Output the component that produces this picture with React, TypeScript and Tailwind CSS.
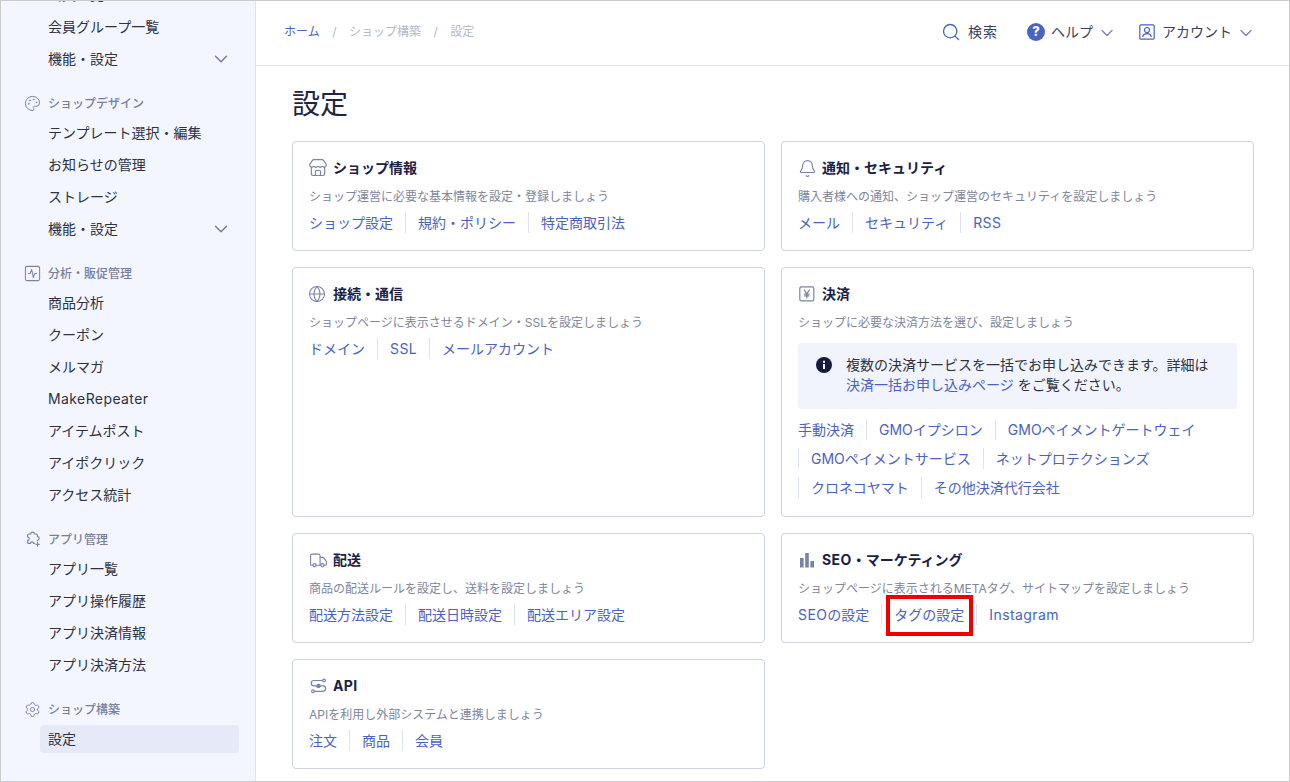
import React from "react";
import { Search, Store, Bell, Globe, Truck, Palette, SquareActivity, Settings, ChevronDown } from "lucide-react";

const FONT = "font-['Inter','Noto_Sans_CJK_JP','Noto_Sans',sans-serif]";

// Latin runs in the reference are set slightly wider than the CJK around them
function Txt({ t }: { t: string }) {
  const parts = t.split(/(MakeRepeater|Instagram|RSS|SSL|SEO|API)/);
  return (
    <>
      {parts.map((p, i) =>
        i % 2 === 1 ? (
          <span key={i} className="tracking-[0.4px]">{p}</span>
        ) : (
          <React.Fragment key={i}>{p}</React.Fragment>
        )
      )}
    </>
  );
}

function Item({ label, chevron, active }: { label: string; chevron?: boolean; active?: boolean }) {
  return (
    <div className={`mt-1 ml-[39px] w-[199px] h-7 pl-2 pr-[7px] flex items-center justify-between rounded text-sm text-[#2d3142] ${active ? "bg-[#e6e9f7]" : ""}`}>
      <span><Txt t={label} /></span>
      {chevron && <ChevronDown size={22} strokeWidth={1.5} className="text-[#6f78a8] -mt-px" />}
    </div>
  );
}

function PuzzlePlus() {
  return (
    <svg width="16" height="16" viewBox="0 0 16 16" fill="none" stroke="#7a82ac" strokeWidth="1.15" strokeLinejoin="round" strokeLinecap="round">
      <path d="M5.6 3 H3.6 a1 1 0 0 0 -1 1 V6 a1.6 1.6 0 0 1 0 3.4 V11.4 a1 1 0 0 0 1 1 H5.4 a1.6 1.6 0 0 1 3.2 0 H9.6" />
      <path d="M5.6 3 a1.9 1.9 0 0 1 3.8 0 H11.4 a1 1 0 0 1 1 1 V5.6 a1.8 1.8 0 0 1 0 3.6 V10" />
      <path d="M12.6 11.6 V15 M10.9 13.3 H14.3" />
    </svg>
  );
}

function Section({ icon, title, children }: { icon: React.ReactNode; title: string; children: React.ReactNode }) {
  return (
    <div className="mt-[18px]">
      <div className="h-6 flex items-center pl-6 text-xs font-medium text-[#787e9e]">
        <span className="w-[23px] flex items-center">{icon}</span>
        <span className="pt-[2px]">{title}</span>
      </div>
      {children}
    </div>
  );
}

function Sidebar() {
  const ic = "text-[#7a82ac] -ml-px";
  return (
    <aside className="w-[255px] shrink-0 h-full overflow-hidden bg-[#f3f6fe] border-r border-[#dfe3f0]">
      <div className="-mt-6">
        <Item label="会員一覧" />
        <Item label="会員グループ一覧" />
        <Item label="機能・設定" chevron />
        <Section icon={<Palette size={17} strokeWidth={1.4} className={ic} />} title="ショップデザイン">
          <Item label="テンプレート選択・編集" />
          <Item label="お知らせの管理" />
          <Item label="ストレージ" />
          <Item label="機能・設定" chevron />
        </Section>
        <Section icon={<SquareActivity size={19} strokeWidth={1.3} className="text-[#7a82ac] -ml-[2px]" />} title="分析・販促管理">
          <Item label="商品分析" />
          <Item label="クーポン" />
          <Item label="メルマガ" />
          <Item label="MakeRepeater" />
          <Item label="アイテムポスト" />
          <Item label="アイポクリック" />
          <Item label="アクセス統計" />
        </Section>
        <Section icon={<PuzzlePlus />} title="アプリ管理">
          <Item label="アプリ一覧" />
          <Item label="アプリ操作履歴" />
          <Item label="アプリ決済情報" />
          <Item label="アプリ決済方法" />
        </Section>
        <Section icon={<Settings size={17} strokeWidth={1.4} className={ic} />} title="ショップ構築">
          <Item label="設定" active />
        </Section>
      </div>
    </aside>
  );
}

function Links({ items, wrap }: { items: string[]; wrap?: boolean }) {
  return (
    <div className={`flex ${wrap ? "flex-wrap gap-y-2" : ""}`}>
      {items.map((t, i) => (
        <a key={t} className={`h-[21px] flex items-center text-sm text-[#4a62c4] ${i === 0 ? "pr-3" : "px-3 border-l border-[#dfe3ee]"}`}>
          <span><Txt t={t} /></span>
        </a>
      ))}
    </div>
  );
}

function Card({ icon, title, desc, children }: { icon: React.ReactNode; title: string; desc: string; children: React.ReactNode }) {
  return (
    <section className="border border-[#cdd2e4] rounded bg-white p-4">
      <h2 className="h-5 flex items-center text-sm font-bold text-[#1b2146]">
        <span className="w-6 shrink-0 flex items-center">{icon}</span>
        <span><Txt t={title} /></span>
      </h2>
      <p className="mt-[9px] h-5 leading-5 text-xs text-[#80859a]">{desc}</p>
      {children}
    </section>
  );
}

const I = "text-[#7a82ac]";

function YenBox() {
  return (
    <svg className="ml-px" width="16" height="16" viewBox="0 0 16 16" fill="none" stroke="#7a82ac" strokeWidth="1.2" strokeLinecap="round" strokeLinejoin="round">
      <rect x="0.8" y="0.8" width="14" height="14" rx="1.6" />
      <path d="M5.3 4 7.8 7.8 10.3 4 M7.8 7.8 V11.8 M5.6 8.2 H10 M5.6 9.8 H10" />
    </svg>
  );
}
function Bars() {
  return (
    <svg className="ml-px" width="16" height="16" viewBox="0 0 16 16" fill="#7a82ac">
      <rect x="1" y="6" width="3.6" height="9.5" />
      <rect x="6.2" y="1" width="3.6" height="14.5" />
      <rect x="11.4" y="9" width="3.6" height="6.5" />
    </svg>
  );
}
function Api() {
  return (
    <svg className="ml-px" width="17" height="16" viewBox="0 0 17 16" fill="none" stroke="#7a82ac" strokeWidth="1.2" strokeLinecap="round">
      <path d="M12.5 2.5 H4 a2.7 2.7 0 0 0 0 5.4 H13 a2.7 2.7 0 0 1 0 5.4 H4.5" />
      <circle cx="14" cy="2.5" r="1.4" />
      <circle cx="8.5" cy="7.9" r="1.6" fill="#7a82ac" />
      <circle cx="3" cy="13.3" r="1.4" />
    </svg>
  );
}
function Help() {
  return (
    <svg width="18" height="18" viewBox="0 0 18 18">
      <circle cx="9" cy="9" r="9" fill="#4a62c4" />
      <text x="9" y="13.4" textAnchor="middle" fontSize="13" fontWeight="800" fill="#fff" fontFamily="Inter, sans-serif">?</text>
    </svg>
  );
}
function Account() {
  return (
    <svg width="16" height="16" viewBox="0 0 16 16" fill="none" stroke="#4a62c4" strokeWidth="1.2" strokeLinejoin="round">
      <rect x="0.8" y="0.8" width="14.4" height="14.4" rx="1.2" />
      <circle cx="8" cy="6" r="2.5" />
      <path d="M3.6 13 C4 10.4 5.6 9.6 8 9.6 S12 10.4 12.4 13" />
    </svg>
  );
}
function Info() {
  return (
    <svg width="16" height="16" viewBox="0 0 16 16">
      <circle cx="8" cy="8" r="8" fill="#161c3d" />
      <rect x="7" y="7" width="2" height="5" fill="#fff" />
      <rect x="7" y="3.8" width="2" height="2" fill="#fff" />
    </svg>
  );
}

function Header() {
  return (
    <header className="h-[65px] shrink-0 border-b border-[#e3e6f0] flex items-center justify-between pl-7 pr-[33px] pb-[3px]">
      <nav className="flex items-center text-xs text-[#b4b9c9]">
        <a className="text-[#4a62c4]">ホーム</a>
        <span className="mx-[12.5px]">/</span>
        <span>ショップ構築</span>
        <span className="mx-[12.5px]">/</span>
        <span>設定</span>
      </nav>
      <div className="flex items-center text-sm text-[#3a4060]">
        <Search size={20} strokeWidth={1.6} className="text-[#4a62c4] mr-[7px]" />
        <span className="tracking-[1px]">検索</span>
        <span className="ml-[29px] mr-[6px] flex"><Help /></span>
        <span>ヘルプ</span>
        <ChevronDown size={20} strokeWidth={1.5} className="text-[#7a82ac] ml-1 mt-[2px]" />
        <span className="ml-[22px] mr-[7px] flex"><Account /></span>
        <span>アカウント</span>
        <ChevronDown size={20} strokeWidth={1.5} className="text-[#7a82ac] ml-1 mt-[2px]" />
      </div>
    </header>
  );
}

const row = "mt-[5px] pb-px";

export default function App() {
  return (
    <div className={`${FONT} w-[1290px] h-[782px] overflow-hidden border border-[#cccccc] flex bg-white`}>
      <Sidebar />
      <div className="flex-1 min-w-0 flex flex-col">
        <Header />
        <main className="pl-9 pr-[35px]">
          <h1 className="mt-[18px] h-10 leading-10 text-[28px] font-normal text-[#1f2540]">設定</h1>
          <div className="mt-[17px] grid grid-cols-2 gap-4">
            <Card icon={<Store size={20} strokeWidth={1.4} className={`${I} -ml-px`} />} title="ショップ情報" desc="ショップ運営に必要な基本情報を設定・登録しましょう">
              <div className={row}><Links items={["ショップ設定", "規約・ポリシー", "特定商取引法"]} /></div>
            </Card>
            <Card icon={<Bell size={19} strokeWidth={1.4} className={I} />} title="通知・セキュリティ" desc="購入者様への通知、ショップ運営のセキュリティを設定しましょう">
              <div className={row}><Links items={["メール", "セキュリティ", "RSS"]} /></div>
            </Card>
            <Card icon={<Globe size={18} strokeWidth={1.4} className={`${I} -ml-px`} />} title="接続・通信" desc="ショップページに表示させるドメイン・SSLを設定しましょう">
              <div className={row}><Links items={["ドメイン", "SSL", "メールアカウント"]} /></div>
            </Card>
            <Card icon={<YenBox />} title="決済" desc="ショップに必要な決済方法を選び、設定しましょう">
              <div className="mt-[10px] h-[66px] rounded-sm bg-[#f1f4fc] pl-[18px] pr-5 py-3 flex text-sm text-[#2d3142]">
                <span className="mt-[2px] mr-[14px] shrink-0"><Info /></span>
                <p className="leading-5">
                  複数の決済サービスを一括でお申し込みできます。詳細は<br />
                  <a className="text-[#4a62c4]">決済一括お申し込みページ</a> をご覧ください。
                </p>
              </div>
              <div className="mt-[10px] pb-[2px]">
                <Links wrap items={["手動決済", "GMOイプシロン", "GMOペイメントゲートウェイ", "GMOペイメントサービス", "ネットプロテクションズ", "クロネコヤマト", "その他決済代行会社"]} />
              </div>
            </Card>
            <Card icon={<Truck size={19} strokeWidth={1.4} className={I} />} title="配送" desc="商品の配送ルールを設定し、送料を設定しましょう">
              <div className={row}><Links items={["配送方法設定", "配送日時設定", "配送エリア設定"]} /></div>
            </Card>
            <Card icon={<Bars />} title="SEO・マーケティング" desc="ショップページに表示されるMETAタグ、サイトマップを設定しましょう">
              <div className={`${row} relative`}>
                <Links items={["SEOの設定", "タグの設定", "Instagram"]} />
                <div className="absolute left-[88px] -top-[9px] w-[87px] h-[41px] border-4 border-[#f00000]" />
              </div>
            </Card>
            <Card icon={<Api />} title="API" desc="APIを利用し外部システムと連携しましょう">
              <div className={row}><Links items={["注文", "商品", "会員"]} /></div>
            </Card>
          </div>
        </main>
      </div>
    </div>
  );
}
